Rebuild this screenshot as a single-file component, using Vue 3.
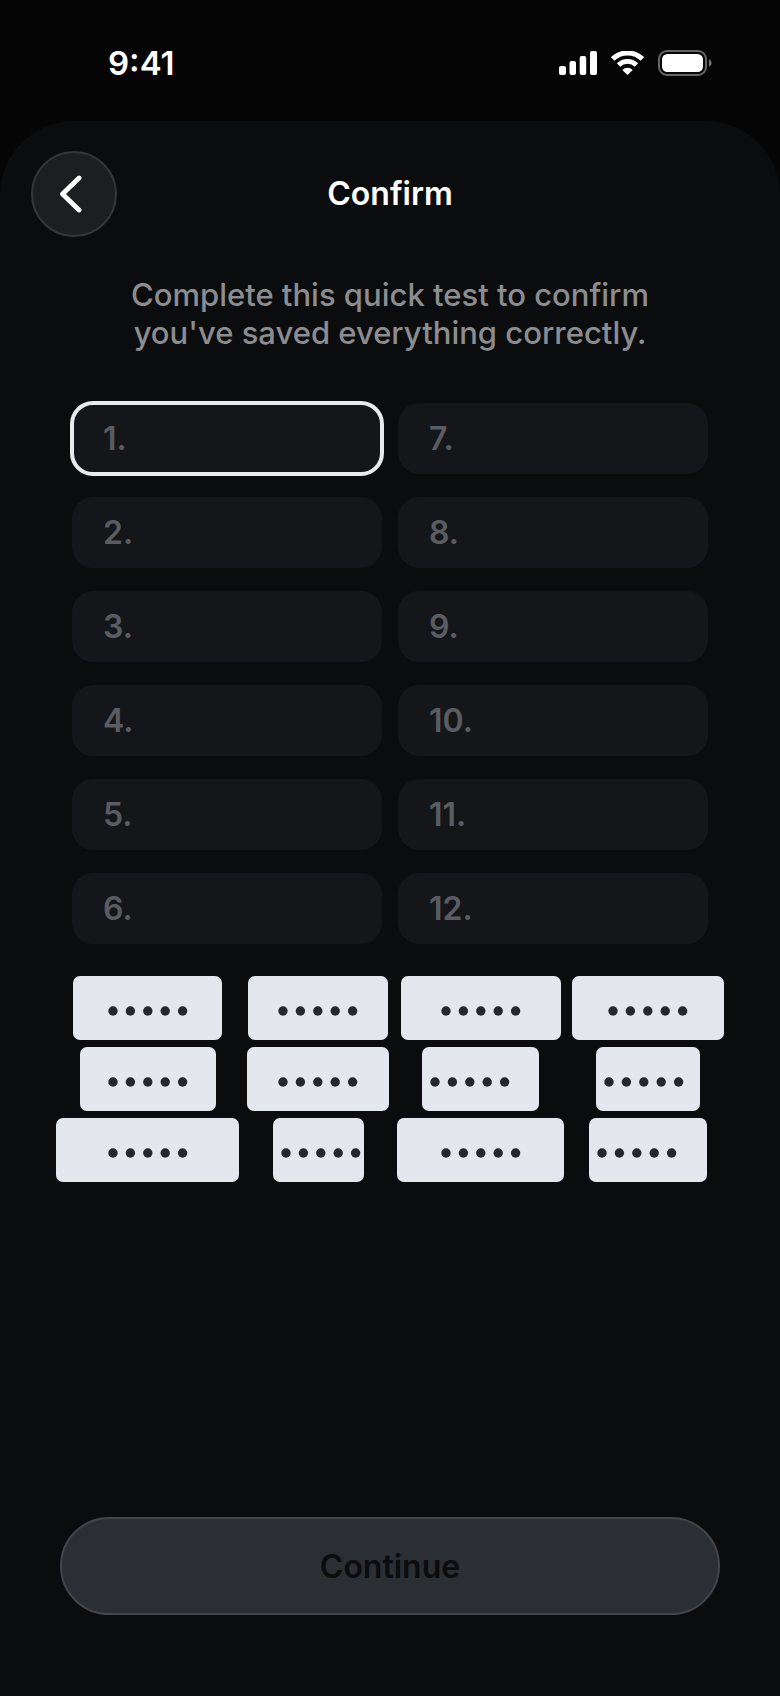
<template>
  <div class="screen">
    <header class="status-bar">
      <span class="time">9:41</span>
      <div class="status-icons">
        <svg width="38" height="24" viewBox="0 0 38 24" fill="#fff" aria-hidden="true">
          <rect x="0" y="15" width="7" height="9" rx="2" />
          <rect x="10.5" y="10" width="6.5" height="14" rx="2" />
          <rect x="20.7" y="5" width="6.5" height="19" rx="2" />
          <rect x="31" y="0" width="7" height="24" rx="2" />
        </svg>
        <svg width="33" height="24" viewBox="0.5 0 33 24" fill="none" stroke="#fff" aria-hidden="true">
          <path d="M2.2 7.9 A21.3 21.3 0 0 1 31.8 7.9" stroke-width="5" />
          <path d="M8 14 A13 13 0 0 1 26 14" stroke-width="4.8" />
          <path d="M17 24 L11.8 18.9 A7.6 7.6 0 0 1 22.2 18.9 Z" fill="#fff" stroke="none" />
        </svg>
        <svg width="54" height="26" viewBox="0 0 54 26" aria-hidden="true">
          <rect x="1" y="1" width="47" height="24" rx="8" fill="none" stroke="#666" stroke-width="2" />
          <rect x="4" y="4" width="41" height="18" rx="5.5" fill="#fff" />
          <path d="M51 9.3 C54.3 10.6 54.3 15.4 51 16.7 Z" fill="#777" />
        </svg>
      </div>
    </header>

    <main class="sheet">
      <div class="nav">
        <button class="back" type="button" aria-label="Back">
          <svg width="24" height="38" viewBox="0 0 24 38" aria-hidden="true">
            <path d="M20 3 L3.5 19 L20 35" />
          </svg>
        </button>
        <h1>Confirm</h1>
      </div>

      <p class="intro">Complete this quick test to confirm<br />you've saved everything correctly.</p>

      <div class="slots">
        <label v-for="n in 12" :key="n" class="slot" :class="{ active: n === current }" @click="current = n">
          <span>{{ n }}.</span>
          <input v-model="answers[n - 1]" type="text" readonly />
        </label>
      </div>

      <div class="words">
        <button
          v-for="(word, index) in words"
          :key="index"
          class="word"
          :class="{ start: word.start }"
          :style="{ width: word.width + 'px' }"
          type="button"
          aria-label="Hidden word"
        >
          <svg width="80" height="10" viewBox="0 0 80 10" aria-hidden="true">
            <circle v-for="i in 5" :key="i" :cx="5 + (i - 1) * 17.4" cy="5" r="4.7" />
          </svg>
        </button>
      </div>

      <button class="continue" type="button" disabled>Continue</button>
    </main>
  </div>
</template>

<script setup>
import { ref } from 'vue'

const current = ref(1)
const answers = ref(Array(12).fill(''))

const words = ref([
  { width: 149 },
  { width: 140 },
  { width: 160 },
  { width: 152 },
  { width: 136 },
  { width: 142 },
  { width: 117, start: true },
  { width: 104, start: true },
  { width: 183 },
  { width: 91, start: true },
  { width: 167 },
  { width: 118, start: true },
])
</script>

<style>
body {
  margin: 0;
  background: #050505;
}
</style>

<style scoped>
.screen {
  display: flex;
  flex-direction: column;
  min-height: 100vh;
  background: #050505;
  color: #fff;
  font-family: Inter, "Liberation Sans", sans-serif;
}

button,
input {
  font: inherit;
}

.status-bar {
  display: flex;
  align-items: center;
  justify-content: space-between;
  box-sizing: border-box;
  height: 121px;
  padding: 5px 68px 0 108px;
}

.time {
  font-size: 33px;
  font-weight: 600;
}

.status-icons {
  display: flex;
  align-items: center;
  gap: 14px;
}

.sheet {
  display: flex;
  flex: 1;
  flex-direction: column;
  padding: 30px 0 81px;
  border-radius: 74px 74px 0 0;
  background: #0b0c0e;
}

.nav {
  display: grid;
  grid-template-columns: 86px 1fr 86px;
  align-items: center;
  padding: 0 31px;
}

.back {
  display: flex;
  align-items: center;
  justify-content: center;
  width: 86px;
  height: 86px;
  padding: 0 6px 0 0;
  border: 2px solid #343638;
  border-radius: 50%;
  background: #1c1e20;
  cursor: pointer;
}

.back path {
  fill: none;
  stroke: #fff;
  stroke-width: 4.8;
  stroke-linecap: round;
  stroke-linejoin: round;
}

h1 {
  margin: 0;
  font-size: 32px;
  font-weight: 600;
  line-height: 40px;
  text-align: center;
}

.intro {
  margin: 39px 0 0;
  color: #8b8d91;
  font-size: 31px;
  font-weight: 500;
  line-height: 38px;
  text-align: center;
}

.slots {
  display: grid;
  grid-template-rows: repeat(6, 71px);
  grid-template-columns: repeat(2, minmax(0, 1fr));
  grid-auto-flow: column;
  gap: 23px 16px;
  margin: 51px 72px 0;
}

.slot {
  display: flex;
  align-items: center;
  gap: 12px;
  padding: 0 31px;
  border-radius: 21px;
  background: #14161a;
  color: #5a5c61;
  font-size: 32px;
  font-weight: 600;
}

.slot.active {
  outline: 4px solid #e9e9ee;
  outline-offset: -2px;
}

.slot input {
  flex: 1;
  width: 100%;
  min-width: 0;
  padding: 0;
  border: none;
  outline: none;
  background: transparent;
  color: #fff;
}

.words {
  display: grid;
  grid-template-columns: repeat(4, auto);
  justify-content: center;
  justify-items: center;
  gap: 7px 8px;
  margin-top: 32px;
}

.word {
  display: flex;
  align-items: center;
  justify-content: center;
  height: 64px;
  padding: 6px 8px 0;
  border: none;
  border-radius: 7px;
  background: #e5e7ee;
  cursor: pointer;
}

.word.start {
  justify-content: flex-start;
}

.word svg {
  flex: none;
  fill: #24272b;
}

.continue {
  height: 98px;
  margin: auto 60px 0;
  border: 2px solid #43454b;
  border-radius: 49px;
  background: #2b2e33;
  color: #0b0c0e;
  font-size: 32px;
  font-weight: 600;
}
</style>
